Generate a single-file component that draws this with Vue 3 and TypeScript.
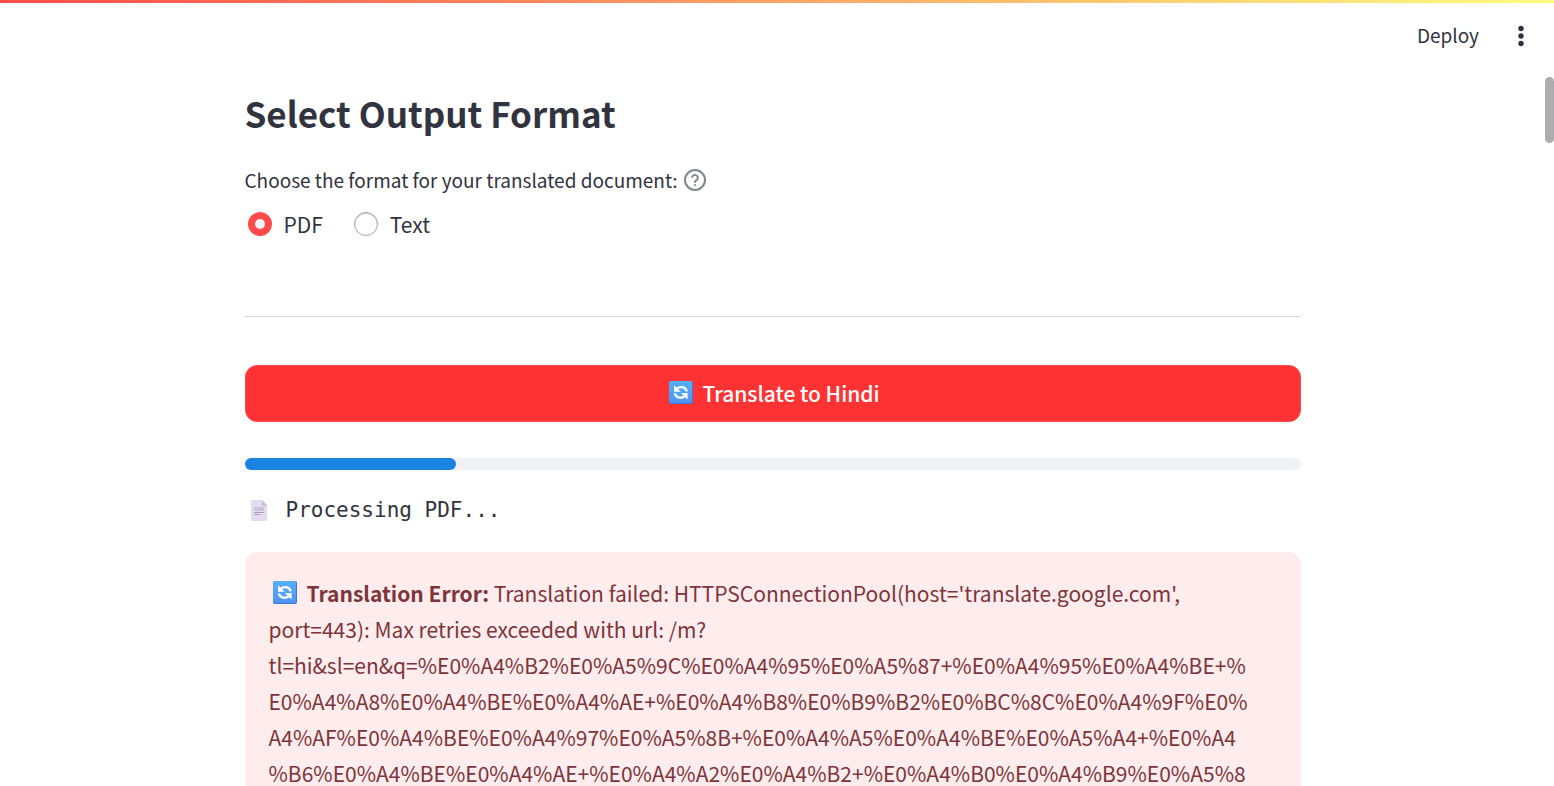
<script setup lang="ts">
import { ref } from 'vue'

const format = ref<string>('PDF')
const formats: string[] = ['PDF', 'Text']
const progress = ref<number>(20)

const errorIntro = "Translation failed: HTTPSConnectionPool(host='translate.google.com',"
const errorLines: string[] = [
  'port=443): Max retries exceeded with url: /m?',
  'tl=hi&sl=en&q=%E0%A4%B2%E0%A5%9C%E0%A4%95%E0%A5%87+%E0%A4%95%E0%A4%BE+%',
  'E0%A4%A8%E0%A4%BE%E0%A4%AE+%E0%A4%B8%E0%B9%B2%E0%BC%8C%E0%A4%9F%E0%',
  'A4%AF%E0%A4%BE%E0%A4%97%E0%A5%8B+%E0%A4%A5%E0%A4%BE%E0%A5%A4+%E0%A4',
  '%B6%E0%A4%BE%E0%A4%AE+%E0%A4%A2%E0%A4%B2+%E0%A4%B0%E0%A4%B9%E0%A5%8',
]
</script>

<template>
  <div class="app">
    <svg class="defs" width="0" height="0" aria-hidden="true">
      <defs>
        <linearGradient id="tile" x1="0" y1="0" x2="0" y2="1">
          <stop offset="0" stop-color="#55b0fb" />
          <stop offset="1" stop-color="#4e93f2" />
        </linearGradient>
        <symbol id="sync" viewBox="0 0 24 24">
          <rect width="24" height="23" rx="2" fill="#3f78d8" />
          <rect x="0" y="0" width="23" height="22" rx="2" fill="url(#tile)" />
          <path d="M17.8 10.4C17 7.6 14.6 6.1 12 6.1c-1.6 0-2.9.5-3.9 1.4" fill="none" stroke="#fff" stroke-width="2.4" />
          <path d="M5 4.2v6.6h6.8z" fill="#fff" />
          <path d="M5.8 12.4c.8 2.8 3.2 4.3 5.8 4.3 1.6 0 2.9-.5 3.9-1.4" fill="none" stroke="#fff" stroke-width="2.4" />
          <path d="M18.6 18.6V12h-6.8z" fill="#fff" />
        </symbol>
      </defs>
    </svg>

    <div class="rainbow"></div>
    <header class="toolbar">
      <button class="deploy" type="button">Deploy</button>
      <button class="menu" type="button" aria-label="Main menu">
        <svg width="6" height="22" viewBox="0 0 6 22" fill="#31333f">
          <circle cx="3" cy="3.5" r="2.7" />
          <circle cx="3" cy="11" r="2.7" />
          <circle cx="3" cy="18.5" r="2.7" />
        </svg>
      </button>
    </header>

    <main class="content">
      <h2 class="title">Select Output Format</h2>

      <fieldset class="formats">
        <legend class="legend">
          Choose the format for your translated document:
          <svg class="help" width="24" height="24" viewBox="0 0 24 24" fill="none" stroke="#83858c" stroke-width="2" stroke-linecap="round" stroke-linejoin="round">
            <circle cx="12" cy="12" r="10" />
            <path d="M9.1 9a3 3 0 0 1 5.8 1c0 2-2.9 2.6-2.9 4" />
            <path d="M12 17h.01" />
          </svg>
        </legend>
        <div class="options">
          <label v-for="item in formats" :key="item" class="option">
            <input v-model="format" class="radio" type="radio" name="format" :value="item" />
            {{ item }}
          </label>
        </div>
      </fieldset>

      <hr class="divider" />

      <button class="translate" type="button">
        <svg class="emoji" width="24" height="24"><use href="#sync" /></svg>
        Translate to Hindi
      </button>

      <div class="track" role="progressbar" aria-label="Translation progress" :aria-valuenow="progress" aria-valuemin="0" aria-valuemax="100">
        <div class="bar" :style="{ width: progress + '%' }"></div>
      </div>

      <div class="status">
        <svg width="16" height="21" viewBox="0 0 16 21">
          <path d="M1 0h10l5 5.5V20a1 1 0 0 1-1 1H1a1 1 0 0 1-1-1V1a1 1 0 0 1 1-1z" fill="#e5dbef" />
          <path d="M11 0l5 5.5h-4a1 1 0 0 1-1-1z" fill="#c5b8d1" />
          <path d="M3 7h10v4H3z" fill="#cdc3d7" />
          <path d="M3 12.5h10M3 14.6h6.5" stroke="#a99eb5" stroke-width="1" />
        </svg>
        <span>Processing PDF...</span>
      </div>

      <section class="alert" role="alert">
        <p class="message">
          <span class="line first">
            <svg class="emoji" width="24" height="24"><use href="#sync" /></svg>
            <span><strong>Translation Error:</strong> {{ errorIntro }}</span>
          </span>
          <span v-for="line in errorLines" :key="line" class="line">{{ line }}</span>
        </p>
      </section>
    </main>

    <div class="thumb"></div>
  </div>
</template>

<style>
body {
  margin: 0;
  background: #fff;
}
</style>

<style scoped>
.app {
  position: relative;
  box-sizing: border-box;
  height: 100vh;
  overflow: hidden;
  color: #31333f;
  font-family: "Noto Sans CJK SC", "Noto Sans", sans-serif;
  font-size: 21px;
  line-height: 36px;
}
.defs {
  position: absolute;
}
.rainbow {
  height: 3px;
  background: linear-gradient(90deg, #ff4b4b, #fffd80);
}
.toolbar {
  display: flex;
  align-items: center;
  justify-content: flex-end;
  gap: 36px;
  height: 66px;
  padding-right: 30px;
}
button {
  font: inherit;
  color: inherit;
  border: 0;
  padding: 0;
  background: none;
  cursor: pointer;
}
.deploy {
  padding-bottom: 2px;
  font-size: 19px;
}
.menu {
  display: flex;
  padding: 0 0 0 3px;
}
.content {
  max-width: 1056px;
  margin: 0 auto;
  padding: 19px 9px 0 0;
}
.title {
  margin: 0;
  font-size: 35px;
  line-height: 50px;
  font-weight: 700;
}
.formats {
  margin: 24px 0 0;
  padding: 0;
  border: 0;
}
.legend {
  display: flex;
  align-items: center;
  gap: 5px;
  padding: 0;
  font-size: 19px;
}
.options {
  display: flex;
  gap: 31px;
  padding: 8px 3px 0;
}
.option {
  display: flex;
  align-items: center;
  gap: 12px;
}
.radio {
  appearance: none;
  box-sizing: border-box;
  width: 24px;
  height: 24px;
  margin: 0;
  border: 1px solid #a3a4aa;
  border-radius: 50%;
  background: #fff;
  box-shadow: inset 0 1px 1px #c4c5c9;
}
.radio:checked {
  border: 7px solid #ff4b4b;
  background: #f0f2f6;
  box-shadow: none;
}
.divider {
  height: 1px;
  margin: 74px 0 48px;
  border: 0;
  background: #d5d6d8;
}
.translate {
  display: flex;
  align-items: center;
  justify-content: center;
  gap: 9px;
  box-sizing: border-box;
  width: 100%;
  height: 57px;
  padding: 0 0 2px 4px;
  border: 1px solid #ff4b4b;
  border-radius: 12px;
  background: #ff3333;
  color: #fff;
  font-weight: 500;
}
.track {
  height: 12px;
  margin-top: 36px;
  border-radius: 6px;
  background: #f0f2f6;
}
.bar {
  height: 100%;
  border-radius: 6px;
  background: #1c83e1;
}
.status {
  display: flex;
  align-items: center;
  gap: 19px;
  margin-top: 22px;
  padding-left: 6px;
  font-family: "DejaVu Sans Mono", monospace;
  font-size: 21px;
}
.alert {
  margin-top: 24px;
  padding: 23px 24px;
  border-radius: 12px;
  background: #ffecec;
  color: #7d353b;
}
.message {
  margin: 0;
}
.line {
  display: block;
  white-space: nowrap;
}
.first {
  display: flex;
  align-items: center;
  gap: 10px;
  padding-left: 4px;
}
.emoji {
  flex: none;
}
.thumb {
  position: absolute;
  top: 77px;
  right: 0;
  width: 9px;
  height: 66px;
  border-radius: 5px;
  background: #acacb1;
}
</style>
